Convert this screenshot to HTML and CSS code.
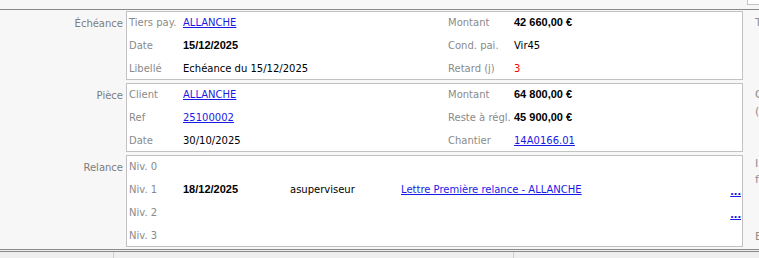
FILE: index.html
```html
<!DOCTYPE html>
<html lang="fr">
<head>
<meta charset="utf-8">
<title>Echéance</title>
<link rel="stylesheet" href="styles.css">
</head>
<body>
<div class="page">
  <div class="topbar">
    <div class="topbox"></div>
  </div>
  <div class="main">
    <div class="section-label">Échéance</div>
    <div class="box">
      <div class="row">
        <span class="lbl">Tiers pay.</span><span class="val"><a href="#">ALLANCHE</a></span>
        <span class="lbl">Montant</span><span class="val b">42 660,00 €</span>
      </div>
      <div class="row">
        <span class="lbl">Date</span><span class="val b">15/12/2025</span>
        <span class="lbl">Cond. pai.</span><span class="val">Vir45</span>
      </div>
      <div class="row">
        <span class="lbl">Libellé</span><span class="val">Echéance du 15/12/2025</span>
        <span class="lbl">Retard (j)</span><span class="val red">3</span>
      </div>
    </div>
    <div class="side side1">T</div>

    <div class="section-label">Pièce</div>
    <div class="box">
      <div class="row">
        <span class="lbl">Client</span><span class="val"><a href="#">ALLANCHE</a></span>
        <span class="lbl">Montant</span><span class="val b">64 800,00 €</span>
      </div>
      <div class="row">
        <span class="lbl">Ref</span><span class="val"><a href="#">25100002</a></span>
        <span class="lbl">Reste à régl.</span><span class="val b">45 900,00 €</span>
      </div>
      <div class="row">
        <span class="lbl">Date</span><span class="val">30/10/2025</span>
        <span class="lbl">Chantier</span><span class="val"><a href="#">14A0166.01</a></span>
      </div>
    </div>
    <div class="side side2"><span>C</span><span>(</span></div>

    <div class="section-label">Relance</div>
    <div class="box">
      <div class="rrow"><span class="lbl">Niv. 0</span></div>
      <div class="rrow">
        <span class="lbl">Niv. 1</span><span class="val b">18/12/2025</span><span class="val">asuperviseur</span><span class="val"><a href="#">Lettre Première relance - ALLANCHE</a></span><span class="more"><a href="#">...</a></span>
      </div>
      <div class="rrow">
        <span class="lbl">Niv. 2</span><span></span><span></span><span></span><span class="more"><a href="#">...</a></span>
      </div>
      <div class="rrow"><span class="lbl">Niv. 3</span></div>
    </div>
    <div class="side side3"><span>I</span><span>f</span><span class="last">E</span></div>
  </div>
  <div class="bottom">
    <div class="cell c1"></div>
    <div class="cell c2"></div>
    <div class="cell c3"></div>
  </div>
</div>
</body>
</html>
```

FILE: styles.css
```css
html, body {
  margin: 0;
  padding: 0;
}
body {
  width: 759px;
  height: 258px;
  overflow: hidden;
  background: #f7f7f7;
  font-family: "DejaVu Sans", Verdana, sans-serif;
  font-size: 10px;
  color: #000;
}
.page {
  display: flex;
  flex-direction: column;
  width: 759px;
  height: 258px;
}
.topbar {
  height: 9px;
  flex: none;
  border-bottom: 1px solid #8a8a8a;
  display: flex;
  justify-content: flex-end;
  align-items: flex-start;
}
.topbox {
  width: 11px;
  height: 4px;
  background: #fff;
  border-left: 1px solid #c4c4c4;
  border-bottom: 1px solid #c4c4c4;
}
.main {
  flex: none;
  display: grid;
  grid-template-columns: 123px 617px 1fr;
  column-gap: 3px;
  row-gap: 3px;
  padding: 1px 0 1px 0;
}
.section-label {
  text-align: right;
  color: #7d7d7d;
  line-height: 21px;
  padding-top: 2px;
}
.box {
  background: #fff;
  border: 1px solid #c2c2c2;
  padding: 0 1px 0 2px;
  display: flex;
  flex-direction: column;
  gap: 2px;
}
.row {
  display: grid;
  grid-template-columns: 54px 265px 66px 1fr;
  height: 21px;
  line-height: 21px;
  white-space: nowrap;
}
.rrow {
  display: grid;
  grid-template-columns: 54px 107px 111px 1fr auto;
  height: 21px;
  line-height: 21px;
  white-space: nowrap;
}
.lbl {
  color: #8a8a8a;
}
.val.b {
  font-family: "Liberation Sans", Arial, sans-serif;
  font-weight: bold;
  font-size: 11px;
}
.red {
  color: #ff0000;
}
a {
  color: #1a1ae6;
  text-decoration: underline;
}
.more {
  font-family: "Liberation Sans", Arial, sans-serif;
  font-weight: bold;
  font-size: 13px;
  line-height: 23px;
  text-align: right;
}
.side {
  margin-left: 9px;
  color: #909090;
  font-size: 11px;
  display: flex;
  flex-direction: column;
  white-space: nowrap;
}
.side1 {
  line-height: 21px;
  padding-top: 1px;
}
.side2 {
  line-height: 17px;
  padding-top: 3px;
  color: #958c85;
}
.side3 {
  line-height: 16px;
  margin-top: 1px;
}
.side3 .last {
  margin-top: auto;
  margin-bottom: 2px;
  color: #958c85;
}
.bottom {
  margin-top: 1px;
  border-top: 1px solid #8a8a8a;
  flex: 1;
  display: flex;
  background: #efefef;
  position: relative;
}
.bottom::before {
  content: "";
  position: absolute;
  left: 0;
  right: 0;
  top: 1px;
  height: 1px;
  background: #8a8a8a;
}
.cell {
  margin-top: 2px;
}
.c1 {
  width: 113px;
  border-right: 1px solid #cfcfcf;
}
.c2 {
  width: 399px;
  border-right: 1px solid #cfcfcf;
}
.c3 {
  flex: 1;
}
```
